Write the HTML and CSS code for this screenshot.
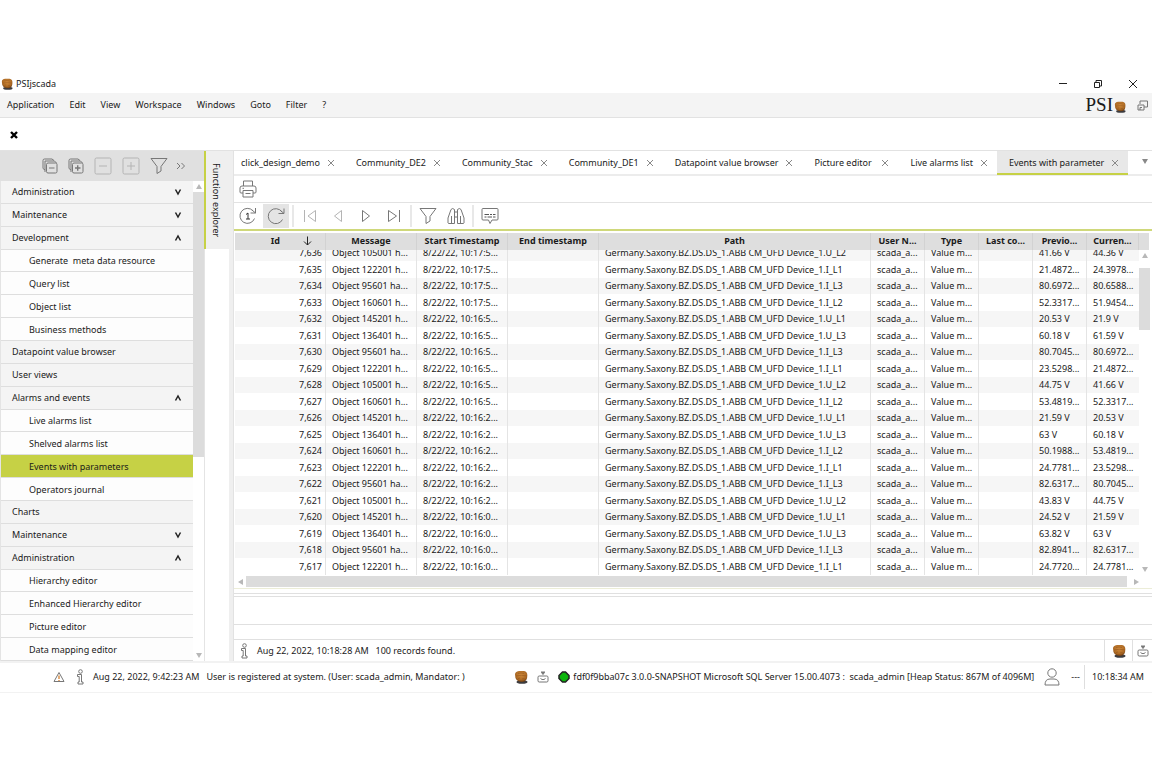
FILE: index.html
```html
<!DOCTYPE html>
<html lang="en">

  <head>

    <meta charset="utf-8"/>

    <title>PSIjscada</title>

    <link rel="stylesheet" href="styles.css">

    <script src="events.js" defer></script>

  </head>

  <body>

    <!-- shared icons -->
    <svg class="defs" width="0" height="0">
      <defs>
        <radialGradient id="nut" cx="50%" cy="35%" r="75%">
          <stop offset="0" stop-color="#d08a3a"/>
          <stop offset="0.6" stop-color="#ad6a24"/>
          <stop offset="1" stop-color="#4a250b"/>
        </radialGradient>
      </defs>
      <symbol id="walnut" viewBox="0 0 14 14">
        <ellipse cx="8" cy="12" rx="5.5" ry="1.8" fill="#3c3c40"/>
        <path d="M1 4.500Q1 1.500 5 1H10Q13.500 1.500 13.300 5.500Q13.500 12 8 12Q1 12 1 4.500Z" fill="url(#nut)"/>
        <path d="M2 6Q7 4.500 13 6M4 3.500Q7 2.500 10 3.500M4 8.500L6 8M8 9L10.500 8.500" fill="none" stroke="#8a4e1a" stroke-width="0.5"/>
      </symbol>
      <symbol id="cross" viewBox="0 0 8 8"><path d="M1 1L7 7M7 1L1 7"/></symbol>
      <symbol id="up" viewBox="0 0 8 8"><path d="M1.500 6.500L4 2L6.500 6.500"/></symbol>
      <symbol id="down" viewBox="0 0 8 8"><path d="M1.500 1.500L4 6L6.500 1.500"/></symbol>
      <symbol id="funnel" viewBox="0 0 18 18"><path d="M1 1.500H17L11 9.500V14L7 16.500V9.500Z"/></symbol>
      <symbol id="info" viewBox="0 0 8 16">
        <circle cx="4.500" cy="2.500" r="1.800"/>
        <path d="M1.500 5.500H5.500V13H7V15H2V13H3.200V7.500H1.500Z"/>
      </symbol>
      <symbol id="tray" viewBox="0 0 12 12">
        <rect x="1" y="5" width="10" height="6" rx="1.200"/>
        <path d="M3.500 7.500L5 8.500H7L8.500 7.500M4 1H8"/>
        <path d="M4.500 1.500H7.500L6 3.500Z" fill="#777"/>
      </symbol>
    </svg>

    <header class="titlebar">
      <svg class="nut-s"><use href="#walnut"/></svg>
      <h1>PSIjscada</h1>
      <div class="window-buttons">
        <button aria-label="Minimize"><svg width="10" height="10" viewBox="0 0 10 10"><path d="M1 4.500H9"/></svg></button>
        <button aria-label="Restore"><svg width="10" height="10" viewBox="0 0 10 10"><path d="M1.500 3.500H6.500V8.500H1.500ZM3 3V1.500H8.500V7H7"/></svg></button>
        <button aria-label="Close"><svg width="10" height="10" viewBox="0 0 10 10"><path d="M1 1L9 9M9 1L1 9"/></svg></button>
      </div>
    </header>

    <nav class="menubar">
      <button>Application</button>
      <button>Edit</button>
      <button>View</button>
      <button>Workspace</button>
      <button>Windows</button>
      <button>Goto</button>
      <button>Filter</button>
      <button>?</button>
      <div class="brand">
        <span>PSI</span>
        <svg class="nut-s"><use href="#walnut"/></svg>
        <button aria-label="Layout"><svg class="line" width="11" height="11" viewBox="0 0 11 11"><path d="M3 4V1H10.500V7H7M1 5H7V10H1ZM3 10V7.500H5"/></svg></button>
      </div>
    </nav>

    <div class="closebar">
      <button aria-label="Close all"><svg width="8" height="8" viewBox="0 0 8 8"><path d="M1 1L7 7M7 1L1 7" stroke="#000" stroke-width="2.400"/></svg></button>
    </div>

    <main>

      <aside class="explorer">
        <div class="explorer-tools">
          <button aria-label="Collapse all"><svg class="line" width="16" height="16" viewBox="0 0 16 16"><path d="M3 12L1 10.500V2.500Q1 1 2.500 1H10L12 2.500M3 14V3H12.500L14.500 5"/><rect x="4.500" y="5" width="10.500" height="10" rx="1.500"/><path d="M7 10H12.500"/></svg></button>
          <button aria-label="Expand all"><svg class="line" width="16" height="16" viewBox="0 0 16 16"><path d="M3 12L1 10.500V2.500Q1 1 2.500 1H10L12 2.500M3 14V3H12.500L14.500 5"/><rect x="4.500" y="5" width="10.500" height="10" rx="1.500"/><path d="M7 10H12.500M9.700 7.200V12.800" stroke-width="1.400"/></svg></button>
          <button aria-label="Collapse" disabled><svg class="line" width="18" height="18" viewBox="0 0 18 18"><rect x="1" y="1" width="16" height="16" rx="1.500"/><path d="M5 9H13"/></svg></button>
          <button aria-label="Expand" disabled><svg class="line" width="18" height="18" viewBox="0 0 18 18"><rect x="1" y="1" width="16" height="16" rx="1.500"/><path d="M5 9H13M9 5V13"/></svg></button>
          <button aria-label="Filter"><svg class="line" width="18" height="18"><use href="#funnel"/></svg></button>
          <button aria-label="More"><svg class="line" width="10" height="8" viewBox="0 0 10 8"><path d="M1 1L4 4L1 7M5.500 1L8.500 4L5.500 7"/></svg></button>
        </div>
        <div class="explorer-body">
          <nav class="tree">
            <a href="#">Administration<svg class="arrow"><use href="#down"/></svg></a>
            <a href="#">Maintenance<svg class="arrow"><use href="#down"/></svg></a>
            <a href="#">Development<svg class="arrow"><use href="#up"/></svg></a>
            <a href="#" class="sub">Generate&nbsp; meta data resource</a>
            <a href="#" class="sub">Query list</a>
            <a href="#" class="sub">Object list</a>
            <a href="#" class="sub">Business methods</a>
            <a href="#">Datapoint value browser</a>
            <a href="#">User views</a>
            <a href="#">Alarms and events<svg class="arrow"><use href="#up"/></svg></a>
            <a href="#" class="sub">Live alarms list</a>
            <a href="#" class="sub">Shelved alarms list</a>
            <a href="#" class="sub current">Events with parameters</a>
            <a href="#" class="sub">Operators journal</a>
            <a href="#">Charts</a>
            <a href="#">Maintenance<svg class="arrow"><use href="#down"/></svg></a>
            <a href="#">Administration<svg class="arrow"><use href="#up"/></svg></a>
            <a href="#" class="sub">Hierarchy editor</a>
            <a href="#" class="sub">Enhanced Hierarchy editor</a>
            <a href="#" class="sub">Picture editor</a>
            <a href="#" class="sub">Data mapping editor</a>
          </nav>
          <div class="vscroll tree-scroll"><i class="tri-up"></i><div class="thumb"></div><i class="tri-down"></i></div>
        </div>
      </aside>

      <div class="dock">
        <button>Function explorer</button>
      </div>

      <section class="workspace">

        <div class="tabs">
          <div class="tab"><button>click_design_demo</button><button aria-label="Close tab"><svg class="x"><use href="#cross"/></svg></button></div>
          <div class="tab"><button>Community_DE2</button><button aria-label="Close tab"><svg class="x"><use href="#cross"/></svg></button></div>
          <div class="tab"><button>Community_Stac</button><button aria-label="Close tab"><svg class="x"><use href="#cross"/></svg></button></div>
          <div class="tab"><button>Community_DE1</button><button aria-label="Close tab"><svg class="x"><use href="#cross"/></svg></button></div>
          <div class="tab"><button>Datapoint value browser</button><button aria-label="Close tab"><svg class="x"><use href="#cross"/></svg></button></div>
          <div class="tab"><button>Picture editor</button><button aria-label="Close tab"><svg class="x"><use href="#cross"/></svg></button></div>
          <div class="tab"><button>Live alarms list</button><button aria-label="Close tab"><svg class="x"><use href="#cross"/></svg></button></div>
          <div class="tab active"><button>Events with parameter</button><button aria-label="Close tab"><svg class="x"><use href="#cross"/></svg></button></div>
          <button class="tab-list" aria-label="Tab list"><i class="tri-down"></i></button>
        </div>

        <div class="printbar">
          <button aria-label="Print"><svg class="line" width="18" height="18" viewBox="0 0 18 18"><path d="M4.500 6V1H13.500V6M4 13H2Q1 13 1 12V8Q1 6 3 6H15Q17 6 17 8V12Q17 13 16 13H14M4 10.500H14V17H4ZM3.500 8.300H5M6.500 13.500H11.500"/></svg></button>
        </div>

        <div class="toolbar">
          <button aria-label="Refresh once"><svg class="line" width="18" height="18" viewBox="0 0 18 18"><path d="M15.500 11.500A7.500 7.500 0 1 1 14 3.800M16.500 1V6H11.500M16.500 6L13 3"/><path d="M7 7.500L9 6V12M7 12H11" stroke="#333"/></svg></button>
          <button class="on" aria-label="Refresh"><svg class="line" width="18" height="18" viewBox="0 0 18 18"><path d="M15.500 12.500A7.500 7.500 0 1 1 15 5M17 1.500V6.500H11.500M17 6.500L13 3"/></svg></button>
          <span class="sep"></span>
          <button aria-label="First" disabled><svg class="line" width="14" height="14" viewBox="0 0 14 14"><path d="M1.500 1V13M12.500 1.500V12.500L5 7Z"/></svg></button>
          <button aria-label="Previous" disabled><svg class="line" width="14" height="14" viewBox="0 0 14 14"><path d="M10.500 1.500V12.500L3.500 7Z"/></svg></button>
          <button aria-label="Next"><svg class="line" width="14" height="14" viewBox="0 0 14 14"><path d="M3.500 1.500V12.500L10.500 7Z"/></svg></button>
          <button aria-label="Last"><svg class="line" width="14" height="14" viewBox="0 0 14 14"><path d="M12.500 1V13M1.500 1.500V12.500L9.500 7Z"/></svg></button>
          <span class="sep"></span>
          <button aria-label="Filter"><svg class="line" width="18" height="18"><use href="#funnel"/></svg></button>
          <button aria-label="Search"><svg class="line" width="18" height="18" viewBox="0 0 18 18"><path d="M1 16V11L4 2.500Q5.500 0.500 7.500 2.500V16.500H1.500ZM17 16V11L14 2.500Q12.500 0.500 10.500 2.500V16.500H16.500ZM7.500 5H10.500M7.500 10H10.500M4.500 9V16M13.500 9V16"/></svg></button>
          <span class="sep"></span>
          <button aria-label="Comment"><svg class="line" width="18" height="18" viewBox="0 0 18 18"><path d="M2 1.500H16Q17 1.500 17 2.500V12Q17 13 16 13H11L9 16.500L7.500 13H2Q1 13 1 12V2.500Q1 1.500 2 1.500Z"/><path d="M3.500 7.500H8M9 7.500H11M12 7.500H14.500M3.500 10H5.500M6.500 10H11M12 10H14.500" stroke="#555"/></svg></button>
        </div>

        <div class="grid">
          <div class="grid-scroll">
            <table>
              <colgroup>
                <col class="w-id"><col class="w-time"><col class="w-time"><col class="w-time"><col>
                <col class="w-val"><col class="w-val"><col class="w-val"><col class="w-val"><col class="w-last">
              </colgroup>
              <thead>
                <tr>
                  <th><span class="sorted">Id<svg width="9" height="10" viewBox="0 0 9 10"><path d="M4.500 0.500V9M1 5.500L4.500 9L8 5.500"/></svg></span></th>
                  <th>Message</th>
                  <th>Start Timestamp</th>
                  <th>End timestamp</th>
                  <th>Path</th>
                  <th>User N...</th>
                  <th>Type</th>
                  <th>Last co...</th>
                  <th>Previo...</th>
                  <th>Curren...</th>
                </tr>
              </thead>
              <tbody id="events"></tbody>
            </table>
          </div>
          <div class="grid-side">
            <div class="corner"></div>
            <div class="vscroll grid-vscroll"><i class="tri-up"></i><div class="thumb"></div><i class="tri-down"></i></div>
          </div>
          <div class="hscroll"><i class="tri-left"></i><div class="thumb"></div><i class="tri-right"></i></div>
        </div>

        <div class="splitter"></div>
        <div class="detail"></div>
        <div class="detail-foot"></div>

        <div class="view-status">
          <svg class="line info"><use href="#info"/></svg>
          <span class="stamp">Aug 22, 2022, 10:18:28 AM</span>
          <span>100 records found.</span>
          <button class="cell nut-cell" aria-label="Messages"><svg class="nut"><use href="#walnut"/></svg></button>
          <button class="cell" aria-label="Tray"><svg class="line tray"><use href="#tray"/></svg></button>
        </div>

      </section>

    </main>

    <footer>
      <svg class="line" width="12" height="12" viewBox="0 0 12 12"><path d="M6 1.500L11 10.500H1Z"/><path d="M6 4.500V8M6 9V10" stroke="#d98a3d" stroke-width="1.400"/></svg>
      <svg class="line info"><use href="#info"/></svg>
      <span class="stamp">Aug 22, 2022, 9:42:23 AM</span>
      <span>User is registered at system. (User: scada_admin, Mandator: )</span>
      <div class="system">
        <svg class="nut"><use href="#walnut"/></svg>
        <svg class="line tray"><use href="#tray"/></svg>
        <svg class="led" width="12" height="12" viewBox="0 0 12 12"><path d="M4.500 1H7.500L11 4.500V7.500L7.500 11H4.500L1 7.500V4.500Z" fill="#0bb50b" stroke="#222" stroke-width="1.500"/></svg>
        <span class="server">fdf0f9bba07c 3.0.0-SNAPSHOT Microsoft SQL Server 15.00.4073 :&nbsp; scada_admin [Heap Status: 867M of 4096M]</span>
        <button aria-label="User"><svg class="line" width="16" height="18" viewBox="0 0 16 18"><circle cx="8" cy="5" r="4.200"/><path d="M1 17Q1 11 6 11H10Q15 11 15 17Z"/></svg></button>
        <span>---</span>
        <time>10:18:34 AM</time>
      </div>
    </footer>

  </body>

</html>
```
FILE: styles.css
```css
*
{
box-sizing: border-box;
}

body
{
display: flex;
flex-direction: column;
height: 100vh;
margin: 0;
padding: 76px 0 75px;
font-family: "Noto Sans", "Open Sans", sans-serif;
font-size: 9px;
line-height: 16px;
color: #1a1a1a;
background-color: white;
}

button
{
display: flex;
align-items: center;
margin: 0;
padding: 0;
border: 0;
font: inherit;
color: inherit;
background: none;
white-space: nowrap;
}

svg
{
flex: none;
fill: none;
stroke: #222;
}

.defs
{
position: absolute;
}

.line
{
stroke: #777;
}

button:disabled .line
{
stroke: #b4b4b4;
}

.nut
{
width: 14px;
height: 14px;
stroke: none;
}

.nut-s
{
width: 12px;
height: 12px;
stroke: none;
}

.info
{
width: 8px;
height: 16px;
}

.tray
{
width: 12px;
height: 12px;
}

/* title and menu */

.titlebar
{
display: flex;
flex: none;
align-items: center;
gap: 3px;
height: 17px;
padding: 0 14px 2px 1px;
}

.titlebar h1
{
margin: 0;
font-size: 9px;
font-weight: normal;
}

.window-buttons
{
display: flex;
gap: 25px;
margin-left: auto;
}

.menubar
{
display: flex;
flex: none;
align-items: center;
gap: 15px;
height: 25px;
padding: 0 4px 0 7px;
border-bottom: 1px solid #e2e2e2;
background-color: #f4f4f4;
}

.brand
{
display: flex;
align-items: center;
gap: 1px;
margin-left: auto;
}

.brand .nut-s
{
align-self: flex-end;
}

.brand span
{
font-family: "Liberation Serif", serif;
font-size: 19px;
}

.brand button
{
margin-left: 10px;
}

.closebar
{
display: flex;
flex: none;
align-items: center;
height: 33px;
padding: 2px 0 0 10px;
border-bottom: 1px solid #e2e2e2;
}

main
{
display: flex;
flex: 1;
min-height: 0;
}

/* function explorer */

.explorer
{
display: flex;
flex: none;
flex-direction: column;
width: 204px;
}

.explorer-tools
{
display: flex;
flex: none;
align-items: center;
justify-content: flex-end;
gap: 10px;
height: 30px;
padding-right: 18px;
background-color: #e0e0e0;
}

.explorer-tools button:last-child
{
margin-left: -2px;
}

.explorer-body
{
display: flex;
flex: 1;
min-height: 0;
}

.tree
{
display: grid;
flex: 1;
grid-auto-rows: 1fr;
border-left: 1px solid #e4e4e4;
}

.tree a
{
display: flex;
align-items: center;
justify-content: space-between;
padding: 1px 11px 0;
border-bottom: 1px solid #dedede;
color: inherit;
text-decoration: none;
background-color: #f4f4f4;
}

.tree .sub
{
padding-left: 28px;
background-color: #fdfdfd;
}

.tree .current
{
background-color: #c6d145;
}

.arrow
{
width: 8px;
height: 8px;
stroke-width: 1.5;
}

.vscroll
{
display: flex;
flex-direction: column;
align-items: center;
width: 11px;
padding: 3px 0;
}

.vscroll .thumb
{
width: 100%;
margin-top: 3px;
background-color: #dcdcdc;
}

.vscroll .tri-down
{
margin-top: auto;
}

.tree-scroll .thumb
{
height: 56%;
}

.tri-up, .tri-down
{
border: 3px solid transparent;
}

.tri-up
{
border-top: 0;
border-bottom: 5px solid #b8b8b8;
}

.tri-down
{
border-bottom: 0;
border-top: 5px solid #b8b8b8;
}

.tri-left, .tri-right
{
border: 3px solid transparent;
}

.tri-left
{
border-left: 0;
border-right: 5px solid #b8b8b8;
}

.tri-right
{
border-right: 0;
border-left: 5px solid #b8b8b8;
}

.dock
{
flex: none;
width: 29px;
border-left: 1px solid #e4e4e4;
border-right: 4px solid #efefef;
}

.dock button
{
width: 25px;
height: 98px;
margin-left: -1px;
padding: 12px 3px 0 0;
border-left: 2px solid #c6d145;
writing-mode: vertical-rl;
background-color: #efefef;
}

/* workspace */

.workspace
{
display: flex;
flex: 1;
flex-direction: column;
min-width: 0;
border-left: 1px solid #e2e2e2;
}

.tabs
{
display: flex;
flex: none;
height: 25px;
border-bottom: 2px solid #ececec;
}

.tab
{
display: flex;
align-items: center;
justify-content: space-between;
gap: 7px;
min-width: 96px;
height: 24px;
padding: 0 9px 0 12px;
}

.tab:first-child
{
padding-left: 7px;
}

.tab.active
{
box-shadow: inset 0 -2px #c6d145;
background-color: #e8e8e8;
}

.x
{
width: 8px;
height: 8px;
stroke: #888;
}

.tab-list
{
margin-left: auto;
padding: 0 4px 2px 0;
}

.tab-list .tri-down
{
border-top-color: #888;
}

.printbar
{
display: flex;
flex: none;
align-items: center;
height: 27px;
padding-left: 5px;
border-bottom: 1px solid #e2e2e2;
}

.toolbar
{
display: flex;
flex: none;
align-items: center;
gap: 10px;
height: 28px;
padding-left: 5px;
border-bottom: 2px solid #cfd87a;
}

.toolbar .on
{
margin: 0 -4px;
padding: 3px 4px;
background-color: #e4e4e4;
}

.toolbar button
{
min-width: 18px;
justify-content: center;
}

.sep
{
width: 2px;
height: 22px;
margin: 0 -3px;
background-color: #e8e8e8;
}

.grid
{
display: grid;
flex: 1;
grid-template-columns: 1fr 13px;
grid-template-rows: 1fr 13px;
min-height: 0;
padding: 2px 0 0 1px;
border-bottom: 1px solid #ecedd8;
}

.grid-scroll
{
min-height: 0;
overflow: hidden;
}

table
{
width: 100%;
table-layout: fixed;
border-spacing: 0;
}

.w-id
{
width: 91px;
}

.w-time
{
width: 91px;
}

.w-val
{
width: 54px;
}

.w-last
{
width: 52px;
}

th, td
{
overflow: hidden;
padding: 0 0 0 6px;
border-right: 1px solid #e4e4e4;
line-height: 16px;
text-align: left;
white-space: nowrap;
}

th
{
position: sticky;
top: 0;
height: 17px;
padding: 0 0 2px;
border-color: #d2d2d2;
line-height: 15px;
text-align: center;
background-color: #dedede;
}

td
{
height: 16px;
}

tr:nth-child(even) td
{
height: 17px;
}

tbody tr:nth-child(odd)
{
background-color: #f6f6f6;
}

td:first-child
{
padding-right: 3px;
text-align: right;
}

td:last-child
{
border-right: 0;
}

.sorted
{
display: flex;
align-items: center;
justify-content: flex-end;
gap: 23px;
padding-right: 13px;
}

.grid-side
{
display: flex;
flex-direction: column;
}

.corner
{
height: 17px;
margin-right: 3px;
background-color: #dedede;
}

.grid-vscroll
{
flex: 1;
}

.grid-vscroll .thumb
{
height: 62px;
margin-top: 10px;
}

.hscroll
{
display: flex;
align-items: center;
gap: 3px;
padding-left: 3px;
}

.hscroll .thumb
{
flex: 1;
height: 11px;
margin-right: 4px;
background-color: #dcdcdc;
}

.splitter
{
flex: none;
height: 8px;
border-bottom: 1px solid #e0e0e0;
background: linear-gradient(#e0e0e0, #e0e0e0) 0 4px / 100% 1px no-repeat;
}

.detail
{
flex: none;
height: 28px;
border-bottom: 1px solid #e0e0e0;
}

.detail-foot
{
flex: none;
height: 15px;
border-bottom: 1px solid #e0e0e0;
}

.view-status
{
display: flex;
flex: none;
align-items: center;
height: 21px;
padding-left: 6px;
}

.stamp
{
margin: 0 7px 0 9px;
}

.cell
{
align-self: stretch;
justify-content: center;
width: 20px;
border-left: 1px solid #e0e0e0;
}

.nut-cell
{
width: 28px;
margin-left: auto;
}

footer
{
display: flex;
flex: none;
align-items: center;
height: 32px;
padding: 0 8px 2px 53px;
border-top: 2px solid #f2f2f2;
border-bottom: 1px solid #f2f2f2;
white-space: nowrap;
}

footer .info
{
margin-left: 11px;
}

.system
{
display: flex;
align-items: center;
margin-left: auto;
}

.system .tray
{
margin: 0 9px;
}

.system .server
{
margin: 0 10px 0 3px;
}

.system button
{
margin-right: 11px;
}

.system time
{
margin-left: 4px;
padding: 4px 0 4px 7px;
border-left: 1px solid #dedede;
}
```
FILE: events.js
```javascript
// id, object, time, device point, previous value, current value
var events = [
  ["7,636", "105001 h...", "10:17:5...", "U_L2", "41.66 V", "44.36 V"],
  ["7,635", "122201 h...", "10:17:5...", "I_L1", "21.4872...", "24.3978..."],
  ["7,634", "95601 ha...", "10:17:5...", "I_L3", "80.6972...", "80.6588..."],
  ["7,633", "160601 h...", "10:17:5...", "I_L2", "52.3317...", "51.9454..."],
  ["7,632", "145201 h...", "10:16:5...", "U_L1", "20.53 V", "21.9 V"],
  ["7,631", "136401 h...", "10:16:5...", "U_L3", "60.18 V", "61.59 V"],
  ["7,630", "95601 ha...", "10:16:5...", "I_L3", "80.7045...", "80.6972..."],
  ["7,629", "122201 h...", "10:16:5...", "I_L1", "23.5298...", "21.4872..."],
  ["7,628", "105001 h...", "10:16:5...", "U_L2", "44.75 V", "41.66 V"],
  ["7,627", "160601 h...", "10:16:5...", "I_L2", "53.4819...", "52.3317..."],
  ["7,626", "145201 h...", "10:16:2...", "U_L1", "21.59 V", "20.53 V"],
  ["7,625", "136401 h...", "10:16:2...", "U_L3", "63 V", "60.18 V"],
  ["7,624", "160601 h...", "10:16:2...", "I_L2", "50.1988...", "53.4819..."],
  ["7,623", "122201 h...", "10:16:2...", "I_L1", "24.7781...", "23.5298..."],
  ["7,622", "95601 ha...", "10:16:2...", "I_L3", "82.6317...", "80.7045..."],
  ["7,621", "105001 h...", "10:16:2...", "U_L2", "43.83 V", "44.75 V"],
  ["7,620", "145201 h...", "10:16:0...", "U_L1", "24.52 V", "21.59 V"],
  ["7,619", "136401 h...", "10:16:0...", "U_L3", "63.82 V", "63 V"],
  ["7,618", "95601 ha...", "10:16:0...", "I_L3", "82.8941...", "82.6317..."],
  ["7,617", "122201 h...", "10:16:0...", "I_L1", "24.7720...", "24.7781..."]
];

var body = document.getElementById("events");

events.forEach(function (e) {
  var row = body.insertRow();
  var cells = [
    e[0],
    "Object " + e[1],
    "8/22/22, " + e[2],
    "",
    "Germany.Saxony.BZ.DS.DS_1.ABB CM_UFD Device_1." + e[3],
    "scada_a...",
    "Value m...",
    "",
    e[4],
    e[5]
  ];
  cells.forEach(function (text) {
    row.insertCell().textContent = text;
  });
});

var scroller = document.querySelector(".grid-scroll");
scroller.scrollTop = scroller.scrollHeight;
```
